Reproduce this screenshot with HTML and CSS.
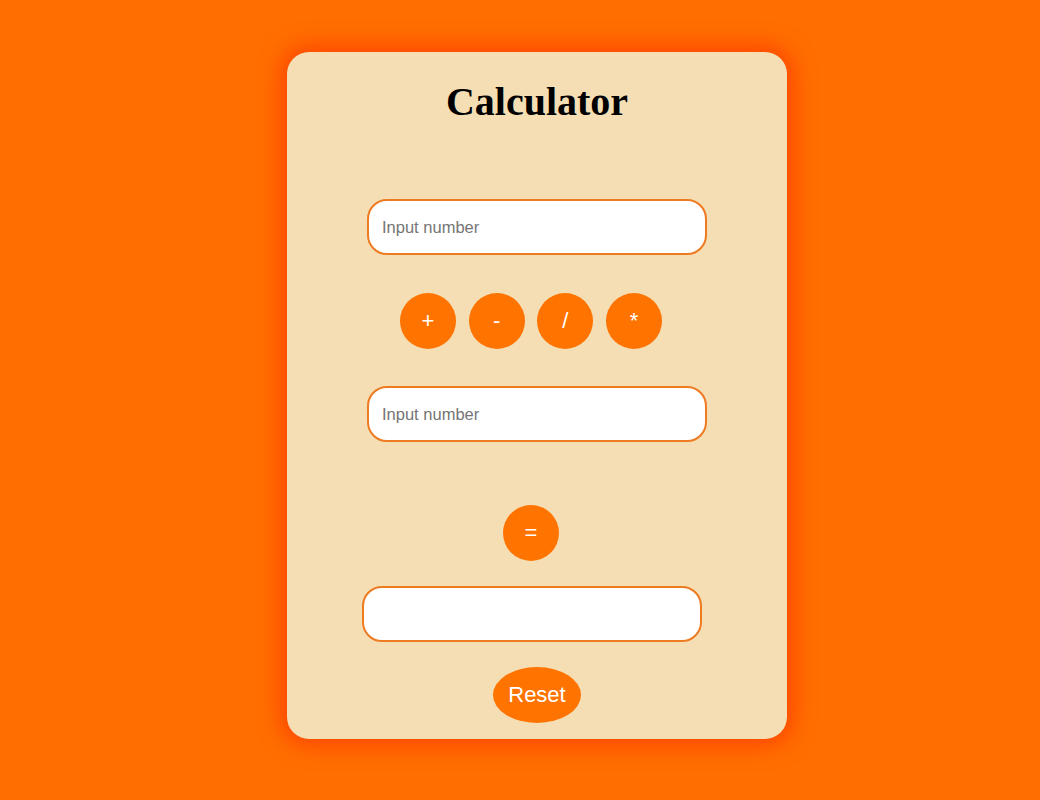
FILE: index.html
```html
<!DOCTYPE html>
<html>
<head>
<meta charset="utf-8">
<link rel="stylesheet" href="styles.css">
</head>
<body>
<div class="card">
  <h1 class="title">Calculator</h1>
  <input class="field first" type="text" placeholder="Input number">
  <div class="ops">
    <button class="circle">+</button>
    <button class="circle">-</button>
    <button class="circle">/</button>
    <button class="circle">*</button>
  </div>
  <input class="field second" type="text" placeholder="Input number">
  <button class="circle equals">=</button>
  <input class="field result" type="text">
  <button class="reset">Reset</button>
</div>
</body>
</html>
```

FILE: styles.css
```css
html, body {
  margin: 0;
  padding: 0;
}
body {
  background: #ff6e00;
  width: 1040px;
  height: 800px;
  padding-top: 52px;
  box-sizing: border-box;
  font-family: "Liberation Sans", Arial, sans-serif;
}
.card {
  width: 500px;
  height: 687px;
  margin-left: 287px;
  box-sizing: border-box;
  background: #f5deb3;
  border-radius: 22px;
  box-shadow: 0 0 22px 6px #ff4500;
  padding-top: 27px;
  display: flex;
  flex-direction: column;
  align-items: center;
}
.title {
  margin: 0;
  font-family: "Liberation Serif", "Times New Roman", serif;
  font-size: 40px;
  font-weight: bold;
  line-height: 46px;
  color: #000;
}
.field {
  width: 340px;
  height: 56px;
  box-sizing: border-box;
  border: 2px solid #ee7a22;
  border-radius: 20px;
  background: #fff;
  padding: 0 13px;
  font-family: "Liberation Sans", Arial, sans-serif;
  font-size: 16.5px;
  outline: none;
}
.field::placeholder {
  color: #757575;
}
.first {
  margin-top: 74px;
}
.ops {
  margin-top: 38px;
  margin-right: 12px;
  display: flex;
  gap: 12.7px;
}
.circle {
  width: 56px;
  height: 56px;
  border-radius: 50%;
  border: none;
  background: #ff7300;
  color: #fff;
  font-family: "Liberation Sans", Arial, sans-serif;
  font-size: 22px;
  padding: 0;
}
.second {
  margin-top: 37px;
}
.equals {
  margin-top: 63px;
  margin-right: 12px;
}
.result {
  margin-top: 25px;
  margin-right: 10px;
}
.reset {
  margin-top: 25px;
  width: 88px;
  height: 56px;
  border-radius: 50%;
  border: none;
  background: #ff7300;
  color: #fff;
  font-family: "Liberation Sans", Arial, sans-serif;
  font-size: 22px;
  padding: 0;
}
```
